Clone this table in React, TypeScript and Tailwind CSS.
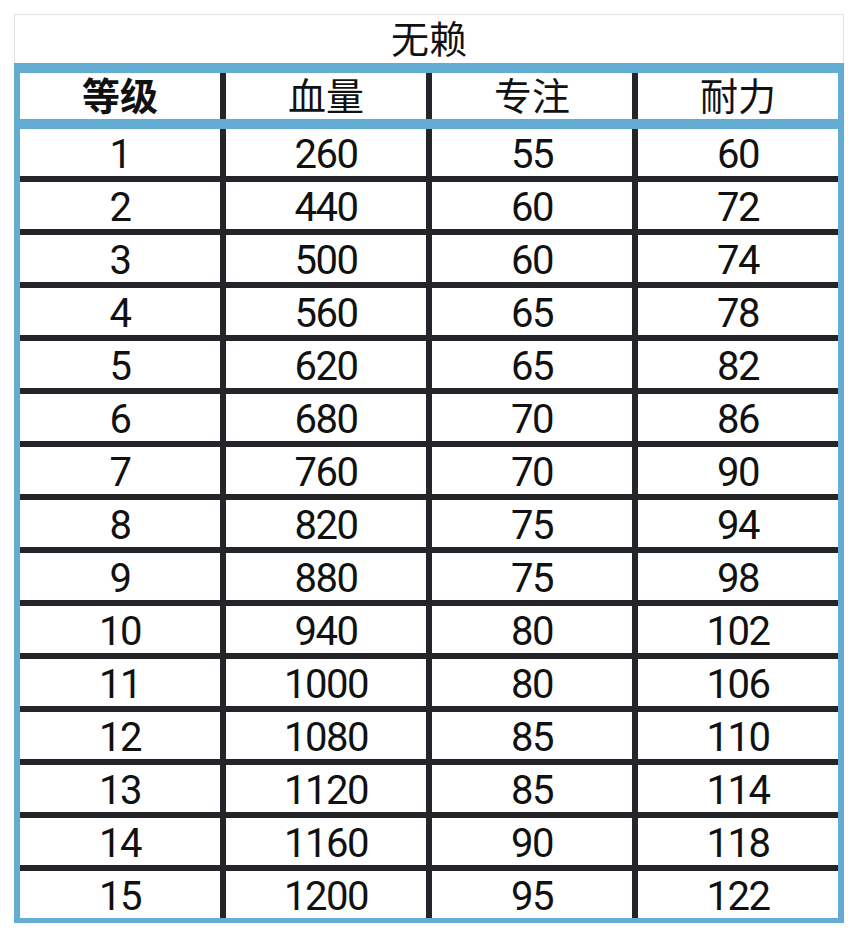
import React from "react";

const rows: [number, number, number, number][] = [
  [1, 260, 55, 60],
  [2, 440, 60, 72],
  [3, 500, 60, 74],
  [4, 560, 65, 78],
  [5, 620, 65, 82],
  [6, 680, 70, 86],
  [7, 760, 70, 90],
  [8, 820, 75, 94],
  [9, 880, 75, 98],
  [10, 940, 80, 102],
  [11, 1000, 80, 106],
  [12, 1080, 85, 110],
  [13, 1120, 85, 114],
  [14, 1160, 90, 118],
  [15, 1200, 95, 122],
];

const headers = ["等级", "血量", "专注", "耐力"];

const cjk = "font-['Noto_Sans_CJK_SC',sans-serif]";
const num = "font-['Roboto','Noto_Sans_CJK_SC',sans-serif]";

export default function App() {
  return (
    <div className="w-[859px] h-[938px] bg-white pt-[14px] pl-[14px]">
      <div className="w-[830px]">
        {/* Title */}
        <div
          className={`h-[49px] pb-[5px] border border-b-0 border-[#dfe2e6] flex items-center justify-center text-[38px] text-[#111] leading-none ${cjk}`}
        >
          无赖
        </div>

        {/* Table */}
        <div className="border-[#63acd4] border-t-[10px] border-x-[6px] border-b-[5px]">
          <div className="grid grid-cols-4 gap-x-[6px] bg-[#232529]">
            {headers.map((h, i) => (
              <div
                key={h}
                className={`h-[46px] pb-[5px] bg-white flex items-center justify-center text-[38px] leading-none text-[#111] ${cjk} ${
                  i === 0 ? "font-bold" : "font-normal"
                }`}
              >
                {h}
              </div>
            ))}
          </div>
          <div className="h-[10px] bg-[#63acd4]" />
          <div className="grid grid-cols-4 gap-[6px] bg-[#232529]">
            {rows.map((r) =>
              r.map((v, j) => (
                <div
                  key={`${r[0]}-${j}`}
                  className={`h-[47px] pt-[4px] bg-white flex items-center justify-center text-[40px] font-normal leading-none tracking-[-1.5px] text-[#111] ${num}`}
                >
                  {v}
                </div>
              ))
            )}
          </div>
        </div>
      </div>
    </div>
  );
}
